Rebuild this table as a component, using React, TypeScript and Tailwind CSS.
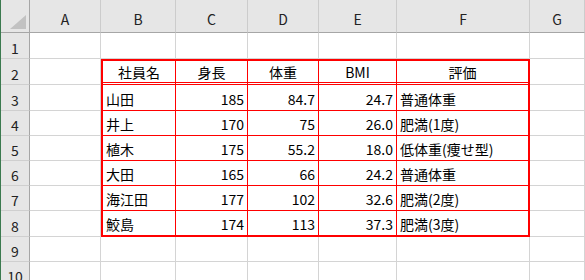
const font = { fontFamily: '"Noto Sans CJK JP", "Noto Sans", sans-serif' };

const colLetters = ["A", "B", "C", "D", "E", "F", "G"];
const rowNums = [1, 2, 3, 4, 5, 6, 7, 8, 9, 10];

const headers = ["社員名", "身長", "体重", "BMI", "評価"];
const people = [
  ["山田", "185", "84.7", "24.7", "普通体重"],
  ["井上", "170", "75", "26.0", "肥満(1度)"],
  ["植木", "175", "55.2", "18.0", "低体重(痩せ型)"],
  ["大田", "165", "66", "24.2", "普通体重"],
  ["海江田", "177", "102", "32.6", "肥満(2度)"],
  ["鮫島", "174", "113", "37.3", "肥満(3度)"],
];

function RowHeader({ n }: { n: number }) {
  return (
    <div className="flex items-end justify-center pb-[3px] bg-[#e6e6e6] border-r border-b border-r-[#a6a6a6] border-b-[#cfcfcf] text-[14px] leading-none text-[#222]">
      {n}
    </div>
  );
}

function Blank() {
  return <div className="border-r border-b border-[#d4d4d4] bg-white" />;
}

function DataTable() {
  return (
    <div className="col-span-5 row-span-7 border-2 border-[#ff0000] bg-white grid grid-cols-[73px_72px_71px_78px_131px] grid-rows-[24px_26px_25px_25px_25px_25px_24px] text-[14px] leading-none text-black">
      {headers.map((h, i) => (
        <div
          key={h}
          className={`flex items-end justify-center pb-[3px] border-b-[3px] border-double border-[#ff0000] ${i < 4 ? "border-r" : ""}`}
        >
          {h}
        </div>
      ))}
      {people.map((row, r) =>
        row.map((v, c) => (
          <div
            key={r + "-" + c}
            className={`flex items-end pb-[4px] border-[#ff0000] ${c < 4 ? "border-r" : ""} ${r < 5 ? "border-b" : ""} ${
              c === 0 || c === 4 ? "justify-start pl-[3px]" : "justify-end pr-[3px]"
            }`}
          >
            {v}
          </div>
        ))
      )}
    </div>
  );
}

export default function App() {
  return (
    <div className="w-[585px] h-[280px] overflow-hidden bg-white border-l border-[#3b7a4f]" style={font}>
      <div className="grid grid-cols-[29px_71px_75px_72px_71px_78px_133px_1fr] grid-rows-[33px_26px_26px_26px_25px_25px_25px_25px_26px_25px_25px]">
        {/* corner */}
        <div className="relative bg-[#e6e6e6] border-r border-b border-r-[#a6a6a6] border-b-[#a6a6a6]">
          <svg className="absolute right-[3px] bottom-[3px]" width="16" height="14" viewBox="0 0 16 14">
            <polygon points="16,0 16,14 0,14" fill="#c2c2c2" />
          </svg>
        </div>
        {colLetters.map((l) => (
          <div
            key={l}
            className="flex items-end justify-center pb-[6px] bg-[#e6e6e6] border-r border-b border-r-[#cccccc] border-b-[#a6a6a6] text-[14px] leading-none text-[#222]"
          >
            {l}
          </div>
        ))}

        {rowNums.map((n) => {
          if (n === 2) {
            return [
              <RowHeader key="h2" n={2} />,
              <Blank key="a2" />,
              <DataTable key="t" />,
              <Blank key="g2" />,
            ];
          }
          if (n > 2 && n < 9) {
            return [<RowHeader key={"h" + n} n={n} />, <Blank key={"a" + n} />, <Blank key={"g" + n} />];
          }
          return [
            <RowHeader key={"h" + n} n={n} />,
            ...colLetters.map((l) => <Blank key={l + n} />),
          ];
        })}
      </div>
    </div>
  );
}
